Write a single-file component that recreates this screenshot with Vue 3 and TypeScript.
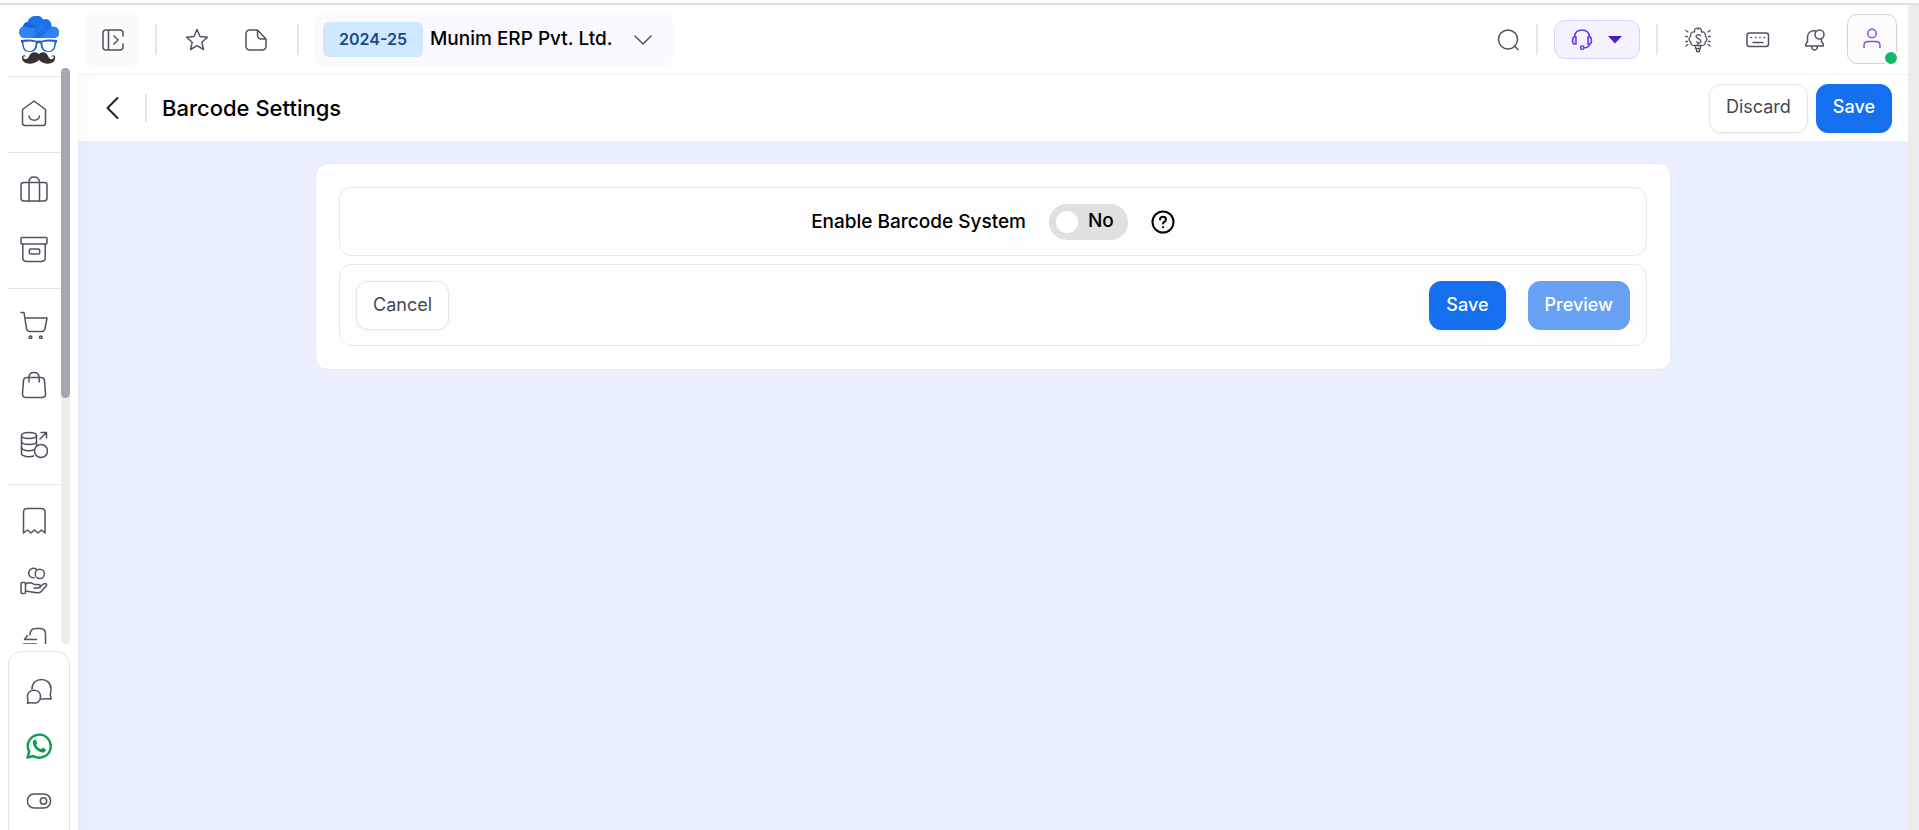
<script setup lang="ts">
import { ref } from 'vue'

interface NavItem {
  label: string
  paths: string[]
}

const navGroups: NavItem[][] = [
  [
    {
      label: 'Home',
      paths: ['M2.5 10.5 14 2l11.500 8.500V24q0 2.500-2.500 2.500H5q-2.500 0-2.500-2.500Z', 'M9 17c.5 5.500 10 5.500 10.500 0'],
    },
  ],
  [
    {
      label: 'Inventory',
      paths: [
        'M4 7.500h20.500q2.500 0 2.500 2.500v13q0 3-3 3H4q-3 0-3-3V10q0-2.500 3-2.500Z',
        'M9 26V7q0-5 5-5t5.500 5v19',
      ],
    },
    {
      label: 'Archive',
      paths: [
        'M2 2.500h24q1 0 1 1V8q0 1-1 1H2Q1 9 1 8V3.500q0-1 1-1Z',
        'M2.800 9v13.500q0 4 4 4h14.400q4 0 4-4V9',
        'M10.500 14h8q1.200 0 1.200 1.200v2.600q0 1.200-1.200 1.200h-8q-1.200 0-1.200-1.200v-2.600q0-1.200 1.200-1.200Z',
      ],
    },
  ],
  [
    {
      label: 'Sales',
      paths: [
        'M1 1.500h3l2.500 16q.4 3 3.500 3h11.500q3 0 3.500-3L27 7H5',
        'M10.500 25a1.300 1.300 0 1 1 0 2.600 1.300 1.300 0 0 1 0-2.600Z',
        'M20.800 25a1.300 1.300 0 1 1 0 2.600 1.300 1.300 0 0 1 0-2.600Z',
      ],
    },
    {
      label: 'Purchase',
      paths: [
        'M7 6.500h14q3.200 0 3.500 3l1 13q.2 4-3.500 4H6q-3.700 0-3.500-4l1-13q.3-3 3.500-3Z',
        'M9 11V6.500q0-5 5-5t5.200 5V11',
      ],
    },
    {
      label: 'Expenses',
      paths: [
        'M1.500 4.500c0-4 15-4 15 0s-15 4-15 0v18c0 3 8 4 12 2.500',
        'M16.500 4.500v10',
        'M1.500 10.500c0 4 15 4 15 0',
        'M1.500 16.500c0 3 8 4 12 2.500',
        'M21 13.500a6.500 6.500 0 1 1 0 13 6.500 6.500 0 0 1 0-13Z',
        'M20 8l6-6M21 1.500h5.500V7',
      ],
    },
  ],
  [
    {
      label: 'Receipts',
      paths: ['M3.500 26V5q0-3.500 3.500-3.500h14q4 0 4 3.500v21l-3.500-3-3.500 3-3.500-3-3.500 3-3.500-3Z'],
    },
    {
      label: 'Payments',
      paths: [
        'M2 15.500h2.500q1 0 1 1v9q0 1-1 1H2q-1 0-1-1v-9q0-1 1-1Z',
        'M5.500 17c4-2.500 6.500-1.500 9 .5h4c2.500 0 2.500 3.500 0 3.500h-4.500M19.500 20l4-3c2.500-1.500 4 .5 2.500 2.200l-4.500 5c-1.500 1.600-3 1.800-5 1.500L5.500 24',
        'M14 10.800a4.800 4.800 0 1 1 2.500-8.500',
        'M19.800 2.300a4.600 4.600 0 1 1 0 9.200 4.600 4.600 0 0 1 0-9.200Z',
      ],
    },
    {
      label: 'Banking',
      paths: ['M10 8q0-6.500 6-6.500h4q5.500 0 5.500 5.500v19', 'M3.500 17h13', 'M16.500 12.500H4.500l3-4'],
    },
  ],
]

const enabled = ref(false)
</script>

<template>
  <div class="app">
    <div class="frame">
      <aside class="sidebar">
        <a class="logo" href="#" aria-label="Munim">
          <svg width="40" height="48" viewBox="0 0 40 48">
            <path fill="#1a73e8" d="M4 22C-1 20-1 12 4 10.500 5 7 7 6 8.500 6 11-2 22-2 24 3.500c5-2 9 2 8.500 7C38 10 40 13 40 16.500c0 3-2 5.500-5 5.500Z" />
            <path fill="#3182ee" d="M4 22C-1 20-1 12 4 10.500c6-1 8 4 13 0L13 22ZM21 22 33 11c5-.5 7 3 7 6s-2 5-5 5Z" />
            <path fill="#1265dc" d="M4 10.500C5 7 7 6 8.500 6c3 .5 4 3 9 4.500-5 4-9-.5-13.500 0Z" />
            <path d="M12 22 24.500 9" stroke="#3d8bf0" fill="none" />
            <path fill="#1a66c8" fill-rule="evenodd" d="M2 24c5-1 12-.5 15 .8q3-.8 6 0C26 23.500 33 23 38 24v2.500l-1 .5c-.5 6-2 9-8 9-5 0-7-3-7.500-8.500q-1.500-1-3 0C18 33 16 36 11 36c-6 0-7.500-3-8-9l-1-.5Zm2.500 2c.2 6.500 1.800 9 6.500 9 4 0 5.500-3.500 5.700-8.700-3.200-1-8.700-1-12.200-.3Zm31 0c-3.500-.7-9-.7-12.200.3.2 5.200 1.700 8.700 5.700 8.700 4.700 0 6.300-2.500 6.500-9Z" />
            <path fill="#333" d="M20 38.200c3-3.200 7.500-2.500 9 1.800 1 3 4.500 4.500 6 1.500-.5-1.500-2-1.500-2.500-.5 0-2.500 3.500-2.500 3.700.5.300 7-10.200 8.500-16.200 2.500-6 6-17.300 4.500-17-2.500.2-3 3.700-3 3.700-.5-.5-1-2-1-2.500.5 1.500 3 5 1.500 6-1.500 1.500-4.300 6.800-5 9.800-1.800Z" />
          </svg>
        </a>

        <div class="scroll-area">
          <nav class="nav" aria-label="Main">
            <div v-for="(group, index) in navGroups" :key="index" class="nav-group">
              <a v-for="item in group" :key="item.label" class="nav-link" href="#" :aria-label="item.label">
                <svg class="line-icon" width="28" height="28" viewBox="0 0 28 28">
                  <path v-for="d in item.paths" :key="d" :d="d" />
                </svg>
              </a>
            </div>
          </nav>
          <div class="track"><div class="thumb"></div></div>
        </div>

        <div class="dock">
          <button class="dock-button" type="button" aria-label="Chat">
            <svg class="line-icon" width="26" height="26" viewBox="0 0 26 26">
              <path d="M6 11C6-2 25-1.500 25 11c0 3-.8 5-.8 6l1 4c-3.200-.8-4.700 0-10.200 0" />
              <path d="M1.500 25.200c.8-3 0-3.700 0-6.700 0-8.500 13-8.500 13 0 0 5-3.500 6.500-6 6.500-3 0-4-.8-7 .2Z" />
            </svg>
          </button>
          <button class="dock-button" type="button" aria-label="WhatsApp">
            <svg width="26" height="26" viewBox="0 0 26 26">
              <path fill="none" stroke="#0b9b52" stroke-width="2.400" stroke-linejoin="round" d="M1.500 24.700 3.200 18.700A11.500 11.500 0 1 1 7.300 23Z" />
              <path fill="#0b9b52" d="M7.200 7.800c1-1.500 2.300-1.500 2.900-.3l1 2.400c.4 1-1.200 1.700-.8 2.400 1 1.800 2.300 3 4.200 3.800.9.400 1.600-1.800 2.500-1.400l2.500 1.200c1.300.8-.5 3.600-2.900 3.600C11.500 19.500 5.200 12.500 7.200 7.800Z" />
            </svg>
          </button>
          <button class="dock-button" type="button" aria-label="Display mode">
            <svg class="line-icon" width="26" height="26" viewBox="0 0 26 26">
              <rect x="1.500" y="6" width="23" height="14" rx="6.500" />
              <circle cx="17.500" cy="13" r="3.200" />
            </svg>
          </button>
        </div>
      </aside>

      <div class="main">
        <header class="topbar">
          <button class="panel-button" type="button" aria-label="Expand menu">
            <svg class="line-icon" width="22" height="22" viewBox="0 0 22 22">
              <path d="M21 7V4q0-3-3-3H4Q1 1 1 4v14q0 3 3 3h14q3 0 3-3v-3M6.500 1v20M12 7l4 4-4 4" />
            </svg>
          </button>
          <span class="divider divider-menu"></span>
          <button class="icon-button star" type="button" aria-label="Favourites">
            <svg class="line-icon" width="24" height="24" viewBox="0 0 24 24">
              <path d="m12 1.500 3 7 7.500.7-5.700 5 1.700 7.300L12 17.700l-6.500 3.800 1.700-7.300-5.700-5L9 8.500Z" />
            </svg>
          </button>
          <button class="icon-button note" type="button" aria-label="Notes">
            <svg class="line-icon" width="22" height="22" viewBox="0 0 22 22">
              <path d="M5 1h7.500L21 10v7q0 4-4 4H5q-4 0-4-4V5q0-4 4-4ZM12.500 1v5q0 4 4 4H21" />
            </svg>
          </button>
          <span class="divider divider-note"></span>
          <button class="company" type="button" aria-haspopup="listbox">
            <span class="year">2024-25</span>
            <span class="company-name">Munim ERP Pvt. Ltd.</span>
            <svg class="line-icon" width="18" height="12" viewBox="0 0 18 12"><path d="m1 2 8 8 8-8" /></svg>
          </button>

          <div class="tools">
            <button class="icon-button" type="button" aria-label="Search">
              <svg class="line-icon" width="22" height="22" viewBox="0 0 22 22">
                <circle cx="11" cy="10.500" r="9.500" /><path d="m17.500 17 3.500 3.500" />
              </svg>
            </button>
            <span class="divider divider-search"></span>
            <button class="support" type="button" aria-label="Support">
              <svg class="headset" width="22" height="22" viewBox="0 0 22 22">
                <path d="M5 8H3.500Q1.500 8 1.500 11.500t2 3.500H5ZM17 8h1.500q2 0 2 3.500t-2 3.500H17Z" fill="#ddd0ff" />
                <path d="M3.500 8C3.500-1.500 18.500-1.500 18.500 8M18.500 15q-.3 3.800-5.500 3.800" />
                <circle cx="11.200" cy="18.800" r="1.700" />
              </svg>
              <svg width="14" height="8" viewBox="0 0 14 8"><path fill="#4c1dbb" d="M0 0h14L7 7.500Z" /></svg>
            </button>
            <span class="divider divider-support"></span>
            <button class="icon-button bulb" type="button" aria-label="Ideas">
              <svg class="line-icon" width="26" height="26" viewBox="0 0 26 26">
                <path d="M9.500 18.500c-2.500.3-4-1.500-3.700-3.500-2.300-1-2.300-4.500-.2-5.500-.6-3 1.400-5 3.900-4.500C9 1.500 12 0 13 2.200 14 0 17 1.500 16.500 5c2.500-.5 4.500 1.500 3.900 4.500 2.100 1 2.100 4.500-.2 5.500.3 2-1.200 3.800-3.700 3.500Z" />
                <path d="M10.500 19v2.500h5V19M11.500 22v2.500h3V22" />
                <path d="M15.500 8.500c-1.500-1.500-4.500-.8-4.500 1s5 2.500 5 4.800c0 1.700-2.500 2.200-4.500.7M13 18v-2" />
                <path d="M.8 3.500 3 5M.8 9.500H2.500M.8 14.500H2.500M.8 19 3 17.500M25.200 3.500 23 5M25.200 9.500h-1.700M25.200 14.500h-1.700M25.200 19 23 17.500" />
              </svg>
            </button>
            <button class="icon-button keyboard" type="button" aria-label="Keyboard shortcuts">
              <svg class="line-icon" width="24" height="16" viewBox="0 0 24 16">
                <rect x="1" y="1" width="21.500" height="13.500" rx="2.500" />
                <path d="M5 5.500h.4M9.500 5.500h.4M13.800 5.500h.4M18.200 5.500h.4M7 10.500h10" />
              </svg>
            </button>
            <button class="icon-button bell" type="button" aria-label="Notifications">
              <svg class="line-icon" width="22" height="22" viewBox="0 0 22 22">
                <path d="M11.500 1.800C6.500 1 3.500 4.500 3.500 8v4.500L1.800 15.200q-.8 1.800 1 1.800h15.400q1.800 0 1-1.800l-1.700-2.700V10M7.500 17.500q.5 3.500 3 3.500t3-3.500" />
                <circle cx="15.500" cy="5.500" r="4.500" />
              </svg>
            </button>
            <button class="avatar" type="button" aria-label="Account">
              <svg class="person" width="20" height="22" viewBox="0 0 20 22">
                <circle cx="10" cy="5.500" r="4.300" /><path d="M2 20v-2.500q0-4 4-4h8q4 0 4 4V20" />
              </svg>
              <span class="status"></span>
            </button>
          </div>
        </header>

        <div class="page-head">
          <button class="back" type="button" aria-label="Back">
            <svg width="14" height="24" viewBox="0 0 14 24"><path d="M12.500 2 2.500 12l10 10" /></svg>
          </button>
          <span class="divider short"></span>
          <h1>Barcode Settings</h1>
          <div class="head-actions">
            <button class="btn" type="button">Discard</button>
            <button class="btn primary" type="button">Save</button>
          </div>
        </div>

        <main class="content">
          <section class="card">
            <div class="panel setting">
              <label for="barcode-enabled">Enable Barcode System</label>
              <span class="switch" :class="{ on: enabled }">
                <input id="barcode-enabled" v-model="enabled" type="checkbox" role="switch" />
                <span class="switch-text">{{ enabled ? 'Yes' : 'No' }}</span>
              </span>
              <button class="help" type="button" aria-label="Help">
                <svg width="24" height="24" viewBox="0 0 24 24">
                  <circle cx="12" cy="12" r="10.500" />
                  <path d="M9 9.500C9.200 5.800 15 6 15 9.500c0 2.200-3 2.500-3 4M12 17v.2" />
                </svg>
              </button>
            </div>
            <div class="panel actions">
              <button class="btn" type="button">Cancel</button>
              <button class="btn primary push" type="button">Save</button>
              <button class="btn primary" type="button" disabled>Preview</button>
            </div>
          </section>
        </main>
      </div>

      <div class="page-track"></div>
    </div>
  </div>
</template>

<style>
body {
  margin: 0;
  background: #fff;
}
</style>

<style scoped>
.app,
.app * {
  box-sizing: border-box;
}

.app {
  height: 100vh;
  padding-top: 3px;
  overflow: hidden;
  font-family: Inter, "Liberation Sans", sans-serif;
  font-size: 19px;
  line-height: 24px;
  color: #000;
}

.frame {
  display: flex;
  height: 100%;
  border-top: 2px solid #e0e0e0;
}

button {
  margin: 0;
  padding: 0;
  border: 0;
  background: none;
  font: inherit;
  color: inherit;
  cursor: pointer;
}

svg {
  display: block;
  flex: none;
}

.line-icon {
  fill: none;
  stroke: #50535f;
  stroke-width: 1.5;
  stroke-linecap: round;
  stroke-linejoin: round;
}

.sidebar {
  display: flex;
  flex: none;
  flex-direction: column;
  width: 78px;
  padding-left: 8px;
}

.logo {
  flex: none;
  height: 63px;
  padding: 11px;
}

.scroll-area {
  display: flex;
  flex: 1;
  min-height: 0;
  margin-right: 8px;
}

.nav {
  flex: 1;
  padding-top: 8px;
  overflow: hidden;
}

.nav-group {
  padding: 6px 0 9px;
  border-top: 1px solid #e4e4e6;
}

.nav-link {
  display: flex;
  align-items: center;
  justify-content: center;
  height: 60px;
  padding-right: 1px;
}

.track {
  width: 9px;
  border-radius: 5px;
  background: #ececec;
}

.thumb {
  height: 57.3%;
  border-radius: 5px;
  background: #a4a7b0;
}

.dock {
  flex: none;
  margin: 7px 8px 0 0;
  padding: 11px 0 2px;
  border: 1px solid #e6e6e8;
  border-bottom: 0;
  border-radius: 14px 14px 0 0;
}

.dock-button {
  display: flex;
  align-items: center;
  justify-content: center;
  width: 100%;
  height: 55px;
}

.main {
  display: flex;
  flex: 1;
  flex-direction: column;
  min-width: 0;
}

.topbar {
  display: flex;
  align-items: center;
  height: 70px;
  padding: 0 11px 0 8px;
  border-bottom: 1px solid #f1f1f2;
}

.panel-button {
  display: flex;
  align-items: center;
  justify-content: center;
  width: 53px;
  height: 53px;
  border-radius: 8px;
  background: #fafafa;
}

.divider {
  flex: none;
  width: 2px;
  height: 31px;
  background: #e6e6e8;
}

.divider.short {
  height: 28px;
}

.divider-menu {
  margin: 0 28px 0 16px;
}

.note {
  margin-left: 36px;
}

.divider-note {
  margin: 0 16px 0 30px;
}

.company {
  display: flex;
  align-items: center;
  height: 53px;
  padding: 0 21px 0 8px;
  border-radius: 8px;
  background: #faf9ff;
  font-weight: 500;
}

.year {
  padding: 5px 16px 6px;
  border-radius: 6px;
  background: #d0e8ff;
  color: #1d4690;
  font-size: 16px;
  font-weight: 600;
}

.company-name {
  margin: 0 21px 0 7px;
  padding-bottom: 2px;
}

.tools {
  display: flex;
  align-items: center;
  margin-left: auto;
}

.divider-search {
  margin: 0 16px 0 17px;
}

.support {
  display: flex;
  align-items: center;
  justify-content: center;
  gap: 15px;
  width: 86px;
  height: 39px;
  padding-right: 2px;
  border: 1px solid #d9d2fb;
  border-radius: 11px;
  background: #f5f2ff;
}

.headset {
  fill: none;
  stroke: #6d35e8;
  stroke-width: 1.5;
}

.divider-support {
  margin: 0 27px 0 16px;
}

.bulb .line-icon {
  stroke-width: 1.3;
}

.keyboard {
  margin: 0 34px 0 35px;
}

.bell {
  margin-right: 21px;
}

.avatar {
  position: relative;
  display: flex;
  align-items: center;
  justify-content: center;
  width: 50px;
  height: 50px;
  margin-bottom: 2px;
  border: 1px solid #d4d4d8;
  border-radius: 10px;
  background: #fcfcfc;
}

.person {
  fill: none;
  stroke: #8453dc;
  stroke-width: 1.5;
}

.status {
  position: absolute;
  right: -3px;
  bottom: -3px;
  width: 16px;
  height: 16px;
  border: 2px solid #fff;
  border-radius: 50%;
  background: #14b86a;
}

.page-head {
  display: flex;
  align-items: center;
  height: 66px;
  padding: 0 16px 0 27px;
  background: linear-gradient(to right, #fafafa, #fff 20px);
}

.back {
  margin-right: 26px;
}

.back path {
  fill: none;
  stroke: #1c202c;
  stroke-width: 2;
  stroke-linecap: round;
  stroke-linejoin: round;
}

h1 {
  margin: 0 0 0 15px;
  font-size: 22px;
  font-weight: 500;
}

.head-actions {
  display: flex;
  gap: 8px;
  margin-left: auto;
}

.btn {
  height: 49px;
  padding: 0 16px 2px;
  border: 1px solid #e6e6e8;
  border-radius: 12px;
  background: #fff;
  box-shadow: 0 1px 3px rgb(0 0 0 / 6%);
  color: #454852;
  font-size: 18px;
}

.btn.primary {
  border-color: #1570ef;
  background: #1570ef;
  color: #fff;
  font-weight: 500;
}

.btn.primary:disabled {
  border-color: #68a1f4;
  background: #68a1f4;
  box-shadow: none;
  cursor: default;
}

.content {
  flex: 1;
  padding-top: 22px;
  background: linear-gradient(to right, #e5ebfa, #eaf0ff 20px);
}

.card {
  display: flex;
  flex-direction: column;
  gap: 8px;
  width: 74.1%;
  margin: 0 auto;
  padding: 23px;
  border: 1px solid #e6e8ee;
  border-radius: 12px;
  background: #fff;
}

.panel {
  display: flex;
  align-items: center;
  padding: 16px 16px 15px;
  border: 1px solid #e8e8ea;
  border-radius: 12px;
  background: #fdfdfd;
}

.setting {
  justify-content: center;
  gap: 23px;
  font-weight: 500;
}

.switch {
  display: flex;
  align-items: center;
  gap: 10px;
  height: 36px;
  padding: 0 14px 0 7px;
  border-radius: 18px;
  background: #e0e0e0;
}

.switch.on {
  flex-direction: row-reverse;
  background: #a9cbfb;
}

.switch input {
  appearance: none;
  width: 22px;
  height: 22px;
  margin: 0;
  border-radius: 50%;
  background: #fff;
  cursor: pointer;
}

.switch-text {
  padding-bottom: 2px;
}

.help svg {
  fill: none;
  stroke: #000;
  stroke-width: 2;
  stroke-linecap: round;
}

.push {
  margin: 0 22px 0 auto;
}

.page-track {
  flex: none;
  width: 11px;
  background: #ececec;
}
</style>
